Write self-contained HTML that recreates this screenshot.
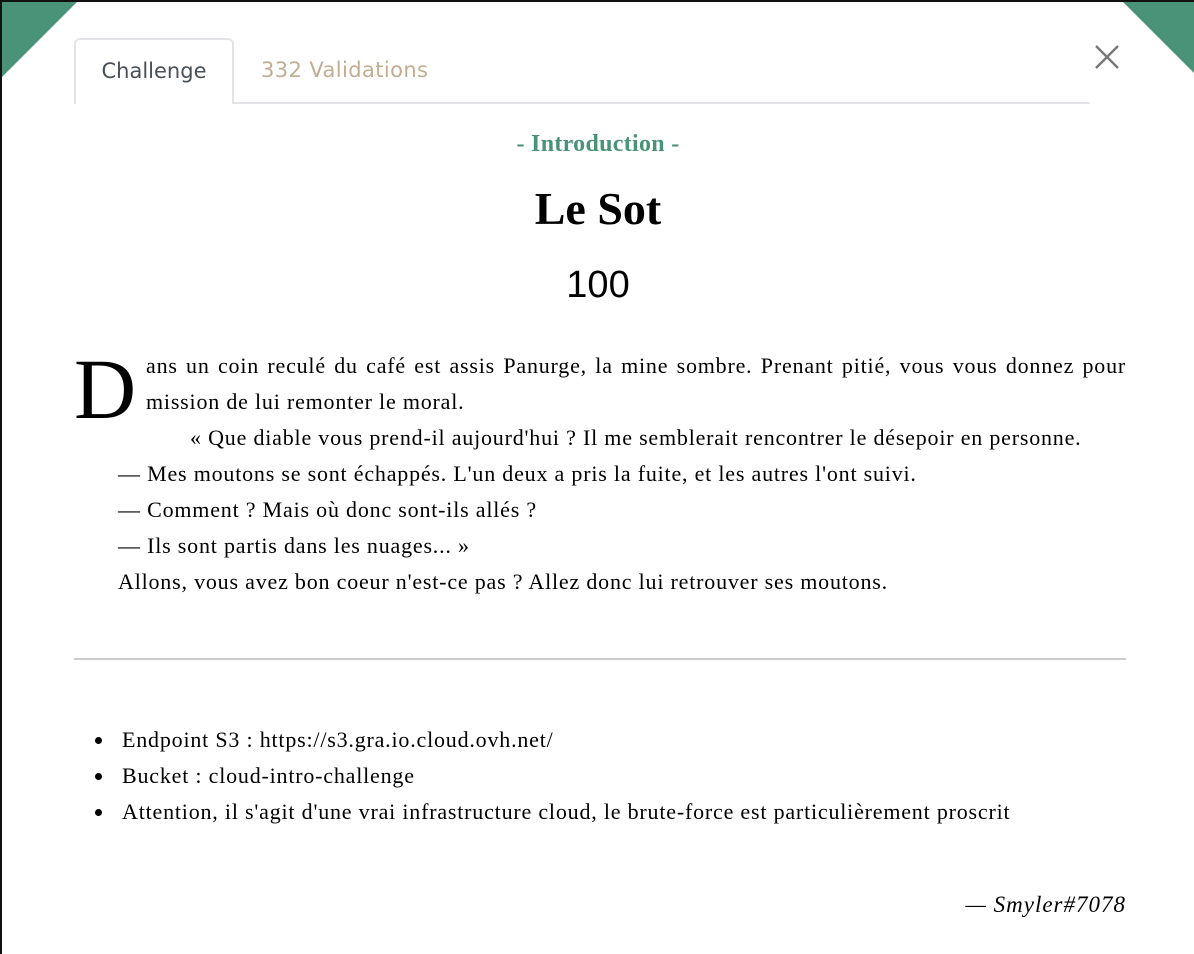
<!DOCTYPE html>
<html><head><style>
html,body{margin:0;padding:0;width:1194px;height:954px;overflow:hidden;background:#111;}
.modal{position:absolute;left:2px;top:2px;width:1192px;height:952px;background:#fff;overflow:hidden;}
.tl{position:absolute;left:0;top:0;width:0;height:0;border-top:75px solid #4a9378;border-right:75px solid transparent;}
.tr{position:absolute;right:0;top:0;width:0;height:0;border-top:71px solid #4a9378;border-left:71px solid transparent;}
.tabs{position:absolute;left:72px;top:36px;width:1016px;height:64px;border-bottom:2px solid #e2e4e8;}
.tab{position:absolute;top:0;height:64px;font-family:"DejaVu Sans","Liberation Sans",sans-serif;font-size:21px;line-height:64px;}
.t1{left:0;width:160px;border:2px solid #e2e4e8;border-bottom:none;border-radius:6px 6px 0 0;background:#fff;color:#495057;text-align:center;box-sizing:border-box;height:66px;line-height:62px;}
.t2{left:187px;color:#c2ad93;letter-spacing:0.4px;line-height:64px;}
.x{position:absolute;left:1092px;top:42px;}
.serif{font-family:"Liberation Serif",serif;color:#000;}
.intro{position:absolute;left:0;width:1192px;top:129px;text-align:center;color:#4a9378;font-weight:bold;font-size:24px;letter-spacing:0.3px;}
h1{position:absolute;margin:0;left:0;width:1192px;top:180px;text-align:center;font-size:46px;font-weight:bold;}
.pts{position:absolute;left:0;width:1192px;top:262px;text-align:center;font-family:"Liberation Sans",sans-serif;font-size:38px;}
.p{position:absolute;left:72px;width:1052px;font-size:22px;letter-spacing:0.8px;line-height:36px;white-space:nowrap;}
.cap{position:absolute;left:72px;top:344px;font-size:86px;line-height:86px;}
hr{position:absolute;left:72px;width:1052px;top:656px;margin:0;border:none;border-top:2px solid #ccc;}
ul{position:absolute;left:72px;top:720px;margin:0;padding-left:48px;font-size:22px;letter-spacing:0.8px;line-height:36px;white-space:nowrap;list-style:none;}
li{position:relative;}
li::before{content:"";position:absolute;left:-27px;top:15px;width:7px;height:7px;border-radius:50%;background:#000;}
.sig{position:absolute;right:68px;top:890px;font-style:italic;font-size:23px;letter-spacing:1px;}
</style></head><body>
<div class="modal">
<div class="tl"></div><div class="tr"></div>
<div class="tabs"><div class="tab t1">Challenge</div><div class="tab t2">332 Validations</div></div>
<svg class="x" width="26" height="26" viewBox="0 0 26 26"><path d="M2 2L24 24M24 2L2 24" stroke="#777" stroke-width="2.4"/></svg>
<div class="intro serif" style="color:#4a9378">- Introduction -</div>
<h1 class="serif">Le Sot</h1>
<div class="pts">100</div>
<div class="cap serif">D</div>
<div class="p serif" style="top:346px;left:144px;width:980px;white-space:normal;text-align:justify;text-align-last:left">ans un coin reculé du café est assis Panurge, la mine sombre. Prenant pitié, vous vous donnez pour mission de lui remonter le moral.</div>
<div class="p serif" style="top:418px;left:188px">« Que diable vous prend-il aujourd'hui ? Il me semblerait rencontrer le désepoir en personne.</div>
<div class="p serif" style="top:454px;left:116px">— Mes moutons se sont échappés. L'un deux a pris la fuite, et les autres l'ont suivi.</div>
<div class="p serif" style="top:490px;left:116px">— Comment ? Mais où donc sont-ils allés ?</div>
<div class="p serif" style="top:526px;left:116px">— Ils sont partis dans les nuages... »</div>
<div class="p serif" style="top:562px;left:116px">Allons, vous avez bon coeur n'est-ce pas ? Allez donc lui retrouver ses moutons.</div>
<hr>
<ul class="serif">
<li>Endpoint S3 : https://s3.gra.io.cloud.ovh.net/</li>
<li>Bucket : cloud-intro-challenge</li>
<li>Attention, il s'agit d'une vrai infrastructure cloud, le brute-force est particulièrement proscrit</li>
</ul>
<div class="sig serif">— Smyler#7078</div>
</div>
</body></html>
